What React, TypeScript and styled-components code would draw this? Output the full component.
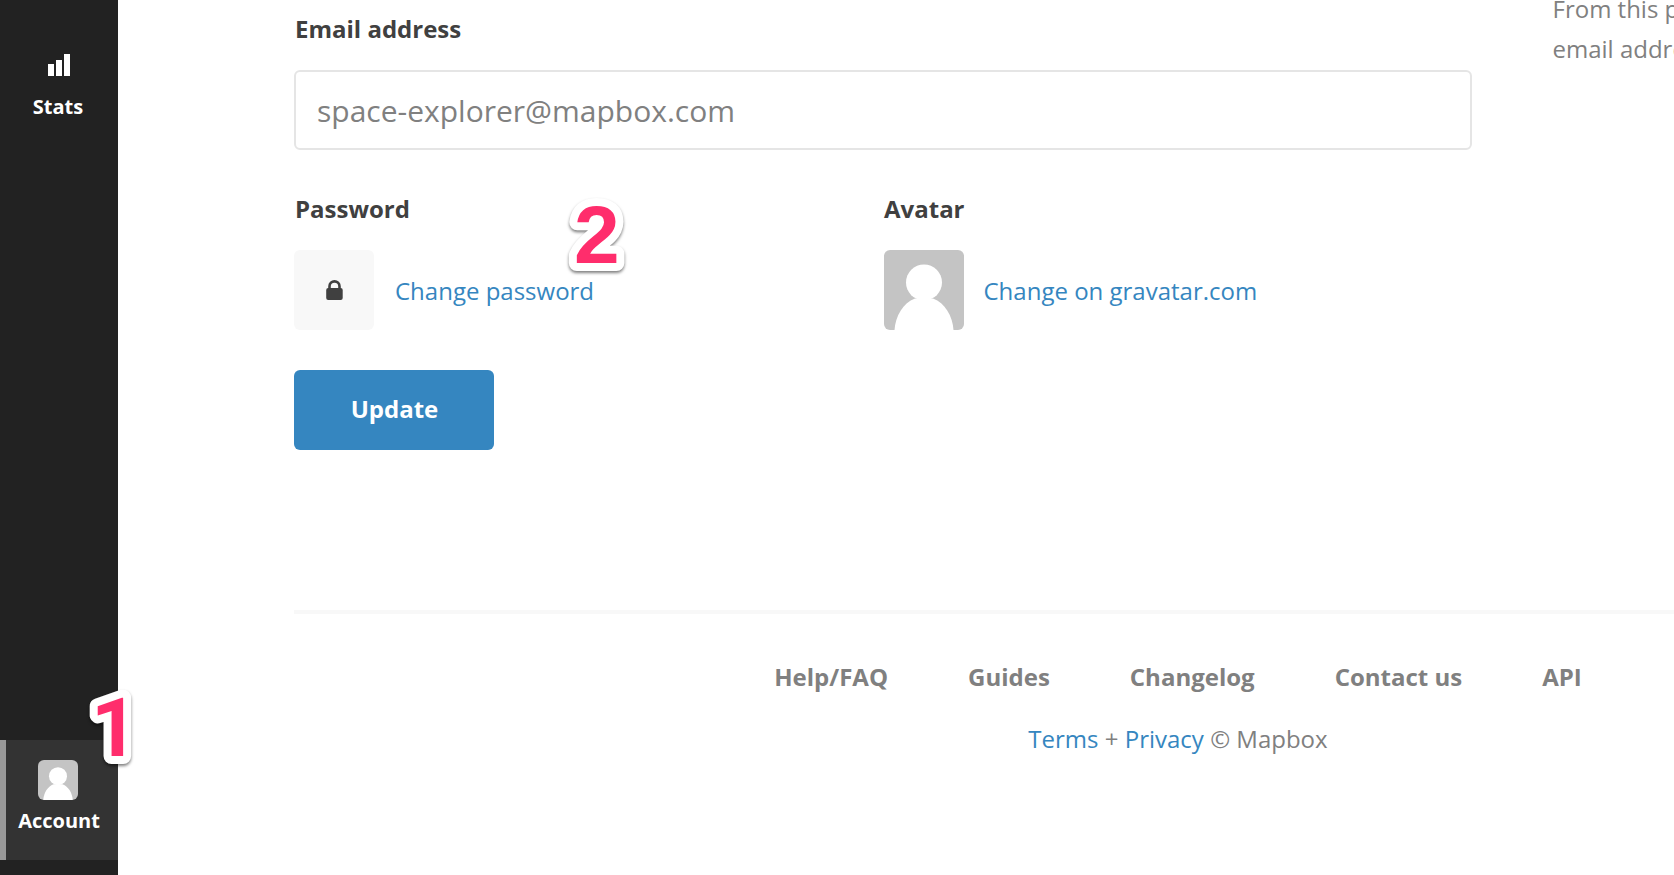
import React from "react";
import styled, { createGlobalStyle } from "styled-components";

const GlobalStyle = createGlobalStyle`
  html, body { margin: 0; padding: 0; background: #fff; overflow: hidden; }
  * { box-sizing: border-box; }
  body { font-family: "Open Sans", "Noto Sans", sans-serif; font-size: 24px; line-height: 40px; color: #808080; }
  a { color: #3586c0; text-decoration: none; }
`;

const Page = styled.div`
  position: relative;
  display: flex;
  width: 1674px;
  height: 875px;
  overflow: hidden;
`;

const Sidebar = styled.nav`
  flex: none;
  width: 118px;
  height: 875px;
  padding: 26px 0 15px;
  background: #222;
  display: flex;
  flex-direction: column;
  justify-content: space-between;
`;

const SideItem = styled.a<{ $active?: boolean }>`
  display: flex;
  flex-direction: column;
  align-items: center;
  height: 120px;
  padding-top: 20px;
  background: ${(p) => (p.$active ? "#333" : "transparent")};
  box-shadow: ${(p) => (p.$active ? "inset 6px 0 0 #999" : "none")};
`;

const SideIcon = styled.span`
  display: flex;
  width: 40px;
  height: 40px;
  margin-right: 2px;
`;

const SideLabel = styled.span<{ $nudge?: number }>`
  padding-right: ${(p) => p.$nudge ?? 0}px;
  font-size: 20px;
  font-weight: 700;
  line-height: 42px;
  color: #fff;
`;

const Main = styled.main`
  flex: none;
  width: 1768px;
  margin-left: 176px;
`;

const Columns = styled.div`
  display: flex;
  gap: 80px;
  height: 610px;
`;

const Form = styled.form`
  flex: none;
  width: 1178px;
  padding-top: 9px;
`;

const Label = styled.label<{ $indent?: number }>`
  display: block;
  height: 40px;
  margin-bottom: 21px;
  padding-left: ${(p) => p.$indent ?? 0}px;
  font-weight: 700;
  color: #404040;
`;

const Input = styled.input`
  display: block;
  width: 100%;
  height: 80px;
  margin-bottom: 39px;
  padding: 0 21px;
  border: 2px solid #e5e5e5;
  border-radius: 6px;
  background: #fff;
  color: #808080;
  font: 400 30px "Open Sans", sans-serif;
  outline: none;
  &::placeholder { color: #808080; opacity: 1; }
`;

const Fields = styled.div`
  display: grid;
  grid-template-columns: 590px 1fr;
  margin-bottom: 40px;
`;

const Field = styled.div`
  min-width: 0;
`;

const Row = styled.div<{ $gap: number }>`
  display: flex;
  align-items: center;
  gap: ${(p) => p.$gap}px;
  height: 80px;
`;

const RowLink = styled.a`
  line-height: 38px;
  padding-top: 2px;
`;

const Tile = styled.span`
  display: flex;
  align-items: center;
  justify-content: center;
  width: 80px;
  height: 80px;
  border-radius: 6px;
  background: #f8f8f8;
`;

const Button = styled.button`
  display: block;
  width: 200px;
  height: 80px;
  padding: 0 0 2px 1px;
  border: 0;
  border-radius: 6px;
  background: #3586c0;
  color: #fff;
  font: 700 24px/78px "Open Sans", sans-serif;
`;

const Aside = styled.aside`
  width: 510px;
  margin-top: -11px;
  padding-left: 0.5px;
`;

const Footer = styled.footer`
  border-top: 4px solid #f8f8f8;
  padding-top: 43px;
  text-align: center;
`;

const FooterLinks = styled.div`
  display: flex;
  justify-content: center;
  gap: 80px;
  margin-bottom: 22px;
`;

const FooterLink = styled.a`
  font-weight: 700;
  color: #808080;
`;

const Legal = styled.div``;

const Badge = styled.svg<{ $x: number; $y: number }>`
  position: absolute;
  left: ${(p) => p.$x}px;
  top: ${(p) => p.$y}px;
  width: 80px;
  height: 100px;
  overflow: visible;
  filter: drop-shadow(0 2px 1.5px rgba(0, 0, 0, 0.5));
`;

const Digit = styled.text<{ $family: string }>`
  font-family: ${(p) => p.$family}, sans-serif;
  font-size: 82px;
  font-weight: 700;
  fill: #ff2d6c;
  stroke: #fff;
  stroke-width: 16px;
  stroke-linejoin: round;
  paint-order: stroke;
`;

const PersonSvg = styled.svg`
  flex: none;
  border-radius: 6px;
`;

function Person({ size }: { size: number }) {
  return (
    <PersonSvg width={size} height={size} viewBox="0 0 80 80">
      <rect width="80" height="80" fill="#c4c4c4" />
      <circle cx="40" cy="32.4" r="18" fill="#fff" />
      <path d="M10.500 80C11.500 66 19 53 31 48.500H49C61 53 68.500 66 69.500 80Z" fill="#fff" />
    </PersonSvg>
  );
}

export default function App() {
  return (
    <>
      <GlobalStyle />
      <Page>
        <Sidebar>
          <SideItem href="#">
            <SideIcon>
              <svg width="40" height="40" viewBox="0 0 40 40" fill="#fff">
                <path d="M10 18h6v12h-6zM18 14h6v16h-6zM26 8h6v22h-6z" />
              </svg>
            </SideIcon>
            <SideLabel $nudge={2}>Stats</SideLabel>
          </SideItem>
          <SideItem href="#" $active>
            <SideIcon>
              <Person size={40} />
            </SideIcon>
            <SideLabel>Account</SideLabel>
          </SideItem>
        </Sidebar>
        <Main>
          <Columns>
            <Form>
              <Label $indent={1}>Email address</Label>
              <Input placeholder="space-explorer@mapbox.com" />
              <Fields>
                <Field>
                  <Label $indent={1}>Password</Label>
                  <Row $gap={21}>
                    <Tile>
                      <svg width="18" height="20" viewBox="0 0 18 20">
                        <path d="M4.500 9V6.200a5 4.800 0 0 1 10 0V9" fill="none" stroke="#404040" strokeWidth="2.600" />
                        <rect x="1.200" y="8" width="16.500" height="12" rx="2" fill="#404040" />
                      </svg>
                    </Tile>
                    <RowLink href="#">Change password</RowLink>
                  </Row>
                </Field>
                <Field>
                  <Label>Avatar</Label>
                  <Row $gap={19.5}>
                    <Person size={80} />
                    <RowLink href="#">Change on gravatar.com</RowLink>
                  </Row>
                </Field>
              </Fields>
              <Button type="button">Update</Button>
            </Form>
            <Aside>
              From this page you can change your
              <br />
              email address and password.
            </Aside>
          </Columns>
          <Footer>
            <FooterLinks>
              <FooterLink href="#">Help/FAQ</FooterLink>
              <FooterLink href="#">Guides</FooterLink>
              <FooterLink href="#">Changelog</FooterLink>
              <FooterLink href="#">Contact us</FooterLink>
              <FooterLink href="#">API</FooterLink>
            </FooterLinks>
            <Legal>
              <a href="#">Terms</a> + <a href="#">Privacy</a> © Mapbox
            </Legal>
          </Footer>
        </Main>
        <Badge $x={574} $y={183}>
          <Digit x="0" y="80" $family={'"Liberation Sans"'}>2</Digit>
        </Badge>
        <Badge $x={91} $y={676}>
          <Digit x="0" y="80" $family="Roboto">1</Digit>
        </Badge>
      </Page>
    </>
  );
}
